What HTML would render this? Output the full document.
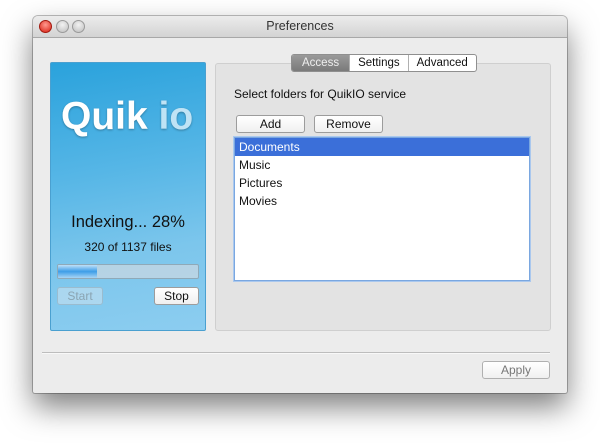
<!DOCTYPE html>
<html><head><style>
*{margin:0;padding:0;box-sizing:border-box}
body{width:600px;height:443px;background:#fff;position:relative;overflow:hidden;font-family:"Liberation Sans","DejaVu Sans",sans-serif;font-size:11.5px;color:#111}
.win{position:absolute;left:33px;top:16px;width:534px;height:377px;background:#ececec;border-radius:5px 5px 2px 2px;box-shadow:0 14px 30px rgba(0,0,0,.5),0 0 0 1px rgba(0,0,0,.25)}
.title{height:22px;background:linear-gradient(#ececec,#d3d3d3);border-bottom:1px solid #a8a8a8;border-radius:5px 5px 0 0;text-align:center;line-height:21px;font-size:12.5px;color:#333}
.dot{position:absolute;top:4px;width:13px;height:13px;border-radius:50%;background:radial-gradient(circle at 50% 35%,#f2f2f2,#bdbdbd);border:1px solid #9a9a9a}
.abs{position:absolute}
.blue{left:17px;top:46px;width:156px;height:269px;background:linear-gradient(170deg,#2aa2dc 0%,#56b6e6 40%,#7cc6ec 70%,#8ccdf0 100%);border:1px solid #4aa0d0;border-radius:2px}
.btn{position:absolute;height:18px;background:linear-gradient(#fff,#f0f0f0);border:1px solid #9c9c9c;border-radius:3px;text-align:center;line-height:16px;font-size:12px}
.panel{left:182px;top:47px;width:336px;height:268px;background:#e3e3e3;border:1px solid #cfcfcf;border-radius:3px}
.tabs{left:258px;top:38px;height:18px;display:flex;border:1px solid #8f8f8f;border-radius:3px;background:#fff;font-size:11.5px;line-height:16px;overflow:hidden}
.tabs div{padding:0 8px;border-left:1px solid #b0b0b0}
.list{left:201px;top:121px;width:296px;height:144px;background:#fff;border:1px solid #7aa7e0;box-shadow:0 0 0 1px #aac8ee}
.list div{height:18px;line-height:18px;padding-left:4px;font-size:12px}
</style></head><body>
<div class="win">
<div class="title">Preferences</div>
<div class="dot" style="left:6px;background:radial-gradient(circle at 50% 35%,#ff9a90,#d81e10);border-color:#a21a10"></div>
<div class="dot" style="left:23px"></div>
<div class="dot" style="left:39px"></div>
<div class="abs blue">
 <div class="abs" style="left:10px;top:32px;font-size:39px;font-weight:bold;color:#fff;white-space:nowrap;text-shadow:0 1px 2px rgba(0,0,0,.3)">Quik <span style="color:#bfe3f5">io</span></div>
 <div class="abs" style="left:0;width:154px;top:150px;text-align:center;font-size:16.5px">Indexing... 28%</div>
 <div class="abs" style="left:0;width:154px;top:177px;text-align:center;font-size:12px">320 of 1137 files</div>
 <div class="abs" style="left:6px;top:201px;width:142px;height:15px;border:1px solid #8fa9b8;border-radius:2px;background:rgba(200,215,225,.75);overflow:hidden"><div style="width:39px;height:100%;background:linear-gradient(#bfe0f8,#3d9ee8 50%,#a8d4f4)"></div></div>
 <div class="btn" style="left:6px;top:224px;width:46px;background:rgba(200,225,240,.6);border-color:#9abccf;color:#8aa4b2">Start</div>
 <div class="btn" style="left:103px;top:224px;width:45px">Stop</div>
</div>
<div class="abs panel"></div>
<div class="abs tabs"><div style="border:0;background:linear-gradient(#9a9a9a,#7a7a7a);color:#eee;padding:0 10px">Access</div><div>Settings</div><div>Advanced</div></div>
<div class="abs" style="left:201px;top:71px;font-size:12px">Select folders for QuikIO service</div>
<div class="btn" style="left:203px;top:99px;width:69px">Add</div>
<div class="btn" style="left:281px;top:99px;width:69px">Remove</div>
<div class="abs list"><div style="background:#3b6fd9;color:#fff">Documents</div><div>Music</div><div>Pictures</div><div>Movies</div></div>
<div class="abs" style="left:9px;top:336px;width:508px;height:2px;background:#bdbdbd;border-bottom:1px solid #f8f8f8"></div>
<div class="btn" style="left:449px;top:345px;width:68px;color:#777;border-color:#b0b0b0">Apply</div>
</div>
</body></html>
